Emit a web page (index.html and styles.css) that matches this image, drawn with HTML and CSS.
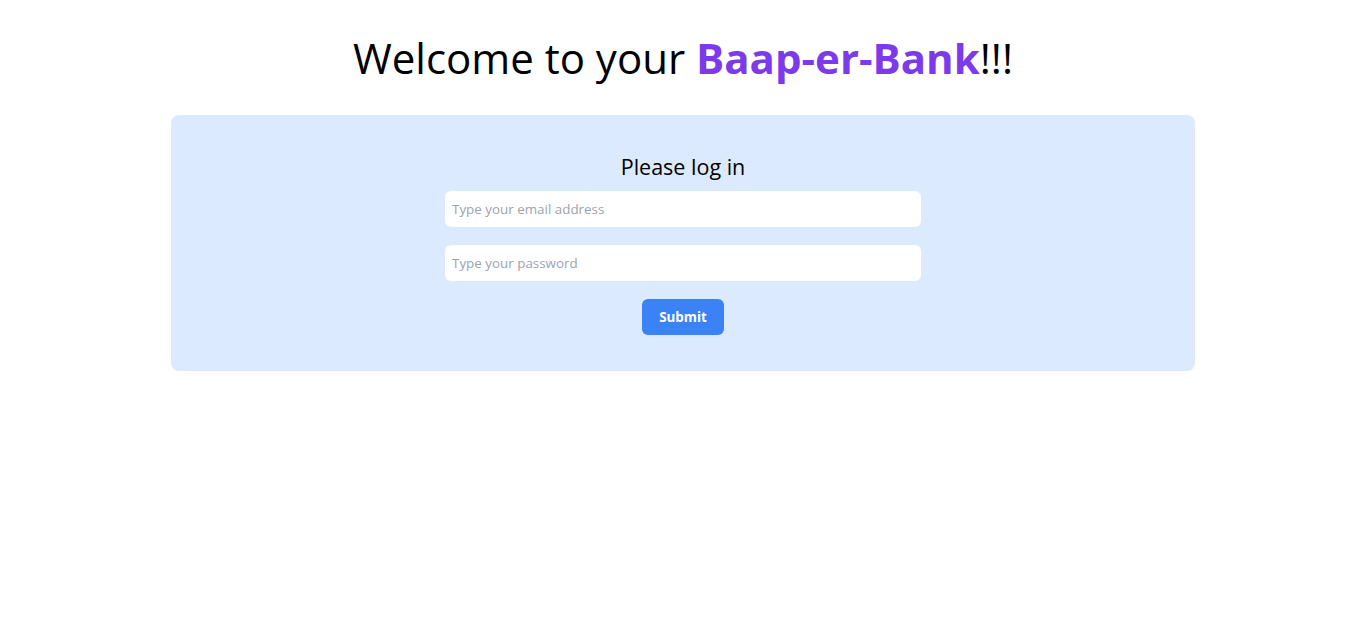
FILE: index.html
```html
<!DOCTYPE html>
<html lang="en">
<head>
<meta charset="utf-8">
<title>Baap-er-Bank</title>
<link rel="stylesheet" href="styles.css">
</head>
<body>
<main class="page">
  <h1 class="title">Welcome to your <span class="brand">Baap-er-Bank</span>!!!</h1>
  <section class="card">
    <h2 class="card-title">Please log in</h2>
    <form class="login-form">
      <input class="field" type="email" placeholder="Type your email address">
      <input class="field" type="password" placeholder="Type your password">
      <button class="submit" type="button">Submit</button>
    </form>
  </section>
</main>
</body>
</html>
```
FILE: styles.css
```css
* { box-sizing: border-box; }
html, body { margin: 0; padding: 0; background: #ffffff; }
body { font-family: "Open Sans", "Noto Sans", sans-serif; color: #000; }
.page { display: flex; flex-direction: column; align-items: center; padding-top: 30px; }
.title { margin: 0; font-size: 42px; line-height: 56px; font-weight: 400; text-align: center; }
.brand { color: #7c3aed; font-weight: 700; }
.card { width: 1024px; margin-top: 29px; background: #dbeafe; border-radius: 8px; padding: 36px; display: flex; flex-direction: column; align-items: center; }
.card-title { margin: 0; font-size: 21.5px; line-height: 32px; font-weight: 400; }
.login-form { width: 476px; margin-top: 8px; display: flex; flex-direction: column; align-items: center; gap: 18px; }
.field { width: 100%; height: 36px; border: none; border-radius: 6px; background: #fff; padding: 0 7px; font-family: inherit; font-size: 13.4px; outline: none; }
.field::placeholder { color: #9ca3af; }
.submit { width: 82px; height: 36px; border: none; border-radius: 6px; background: #3b82f6; color: #fff; font-family: inherit; font-weight: 700; font-size: 13.4px; cursor: pointer; }
```
